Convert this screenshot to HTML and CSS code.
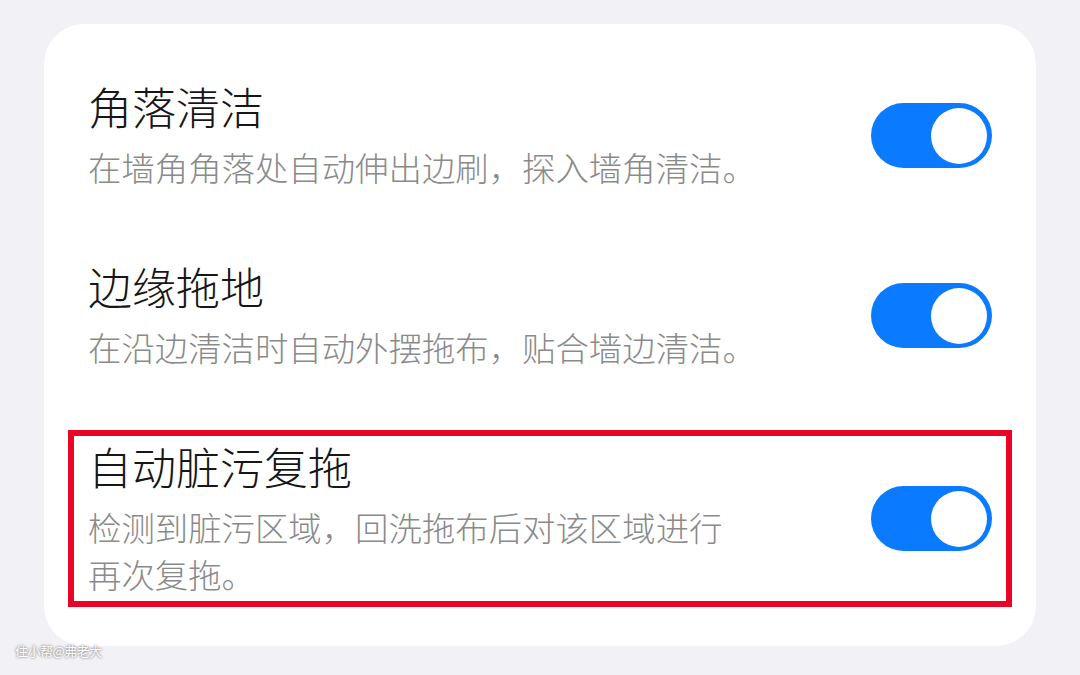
FILE: index.html
```html
<html lang="zh-CN">
<head>
  <meta charset="UTF-8">
  <meta name="viewport" content="width=device-width, initial-scale=1.0">
  <title>清洁设置</title>
  <link rel="stylesheet" href="styles.css">
</head>
<body>
  <div class="card">
    <div class="row">
      <div class="text">
        <div class="title">角落清洁</div>
        <div class="desc">在墙角角落处自动伸出边刷，探入墙角清洁。</div>
      </div>
      <div class="switch on"><span class="knob"></span></div>
    </div>

    <div class="row">
      <div class="text">
        <div class="title">边缘拖地</div>
        <div class="desc">在沿边清洁时自动外摆拖布，贴合墙边清洁。</div>
      </div>
      <div class="switch on"><span class="knob"></span></div>
    </div>

    <div class="row marked">
      <div class="text">
        <div class="title">自动脏污复拖</div>
        <div class="desc">检测到脏污区域，回洗拖布后对该区域进行<br>再次复拖。</div>
      </div>
      <div class="switch on"><span class="knob"></span></div>
    </div>
  </div>

  <div class="watermark">住小帮@弗老大</div>
</body>
</html>
```

FILE: styles.css
```css
body {
  margin: 0;
  width: 1080px;
  height: 675px;
  background: #f1f1f6;
  font-family: "Noto Sans CJK SC", "Noto Sans", sans-serif;
  position: relative;
  overflow: hidden;
}
.card {
  margin: 24px 0 0 44px;
  width: 992px;
  height: 622px;
  box-sizing: border-box;
  background: #ffffff;
  border-radius: 40px;
  padding: 46px 24px 0 24px;
  display: flex;
  flex-direction: column;
  gap: 50px;
}
.row {
  display: flex;
  align-items: center;
  justify-content: space-between;
  padding: 10px 20px 10px 20px;
}
.row.marked {
  outline: 6px solid #ea0425;
  outline-offset: -6px;
}
.title {
  font-size: 44px;
  font-weight: 300;
  line-height: 52px;
  color: #161616;
}
.desc {
  margin-top: 11px;
  font-size: 33.4px;
  font-weight: 300;
  line-height: 47px;
  color: #8a8a8a;
}
.switch {
  width: 121px;
  height: 65px;
  border-radius: 33px;
  background: #0a7bff;
  position: relative;
  flex-shrink: 0;
}
.knob {
  position: absolute;
  top: 5px;
  right: 5px;
  width: 56px;
  height: 56px;
  border-radius: 50%;
  background: #ffffff;
}
.watermark {
  position: absolute;
  left: 15px;
  top: 641px;
  font-size: 13px;
  color: #ffffff;
  text-shadow: 0 0 2px #8a8a8a, 0 0 3px #9a9a9a;
  letter-spacing: -0.5px;
}
```
